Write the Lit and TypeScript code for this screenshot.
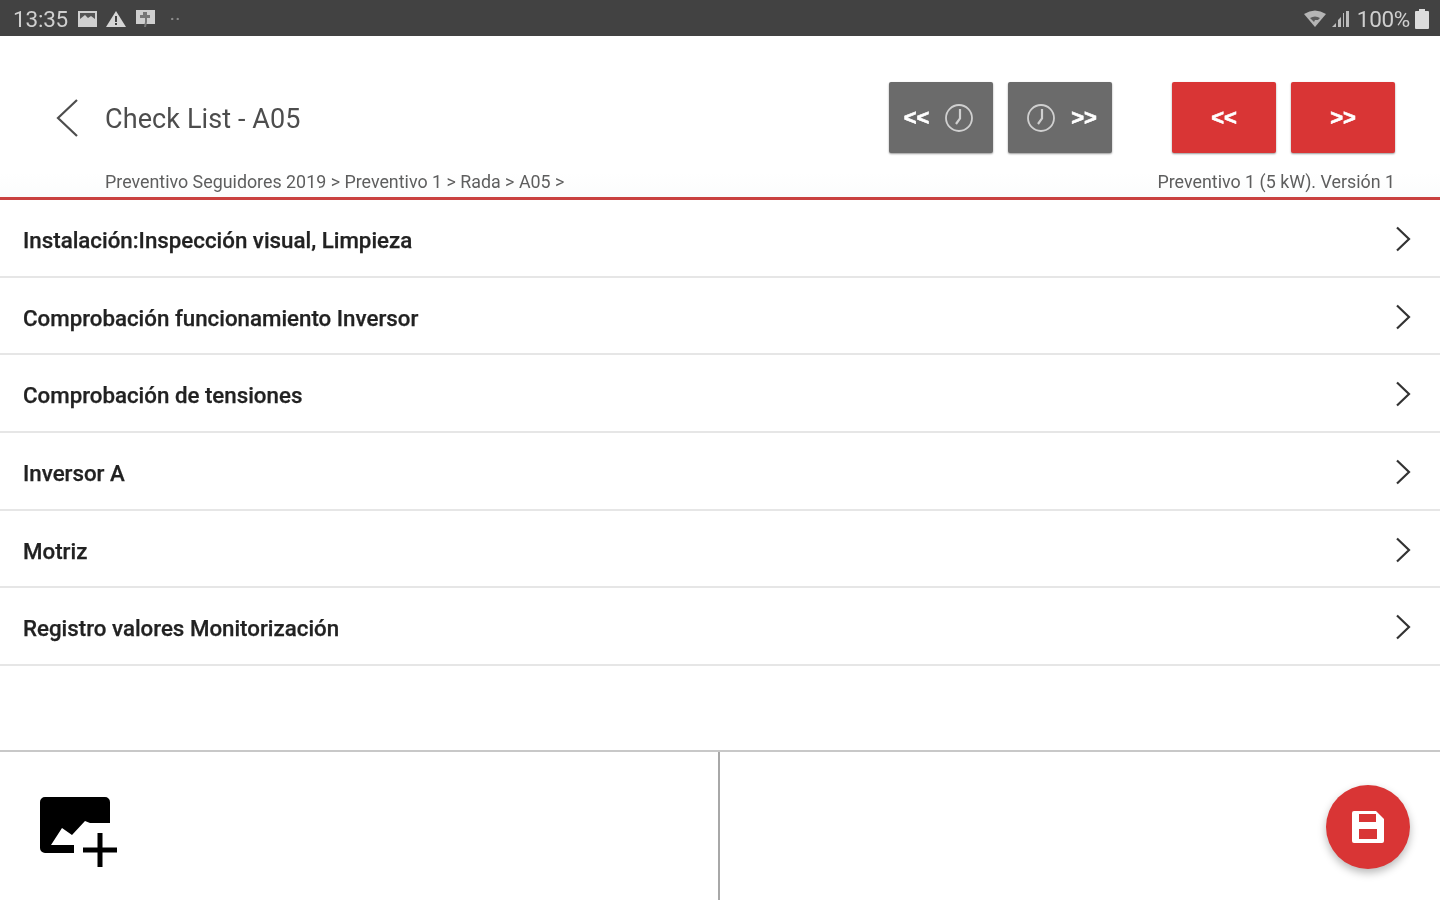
import { LitElement, html, css, svg } from "lit";
import { customElement } from "lit/decorators.js";

const rows = [
  "Instalación:Inspección visual, Limpieza",
  "Comprobación funcionamiento Inversor",
  "Comprobación de tensiones",
  "Inversor A",
  "Motriz",
  "Registro valores Monitorización",
];

const clock = svg`<svg class="clock" viewBox="0 0 30 30" width="30" height="30" fill="none" stroke="#d0d0d0" stroke-width="1.800"><circle cx="15" cy="15" r="13"/><path d="M16 6v9.500l-4 5.500" stroke-width="2.200"/></svg>`;

@customElement("app-root")
export class AppRoot extends LitElement {
  static styles = css`
    :host { display: block; width: 1440px; height: 900px; overflow: hidden; background: #fff; font-family: Roboto, "Liberation Sans", sans-serif; filter: blur(0.7px); }
    .page { display: flex; flex-direction: column; height: 900px; }
    .status { height: 36px; flex: none; background: #424242; display: flex; align-items: center; justify-content: space-between; padding: 2px 11px 0 13px; box-sizing: border-box; color: #cfcfcf; font-size: 22.500px; box-shadow: 0 1px 1px #bbb; }
    .side { display: flex; align-items: center; }
    .time { width: 56px; margin-right: 9px; letter-spacing: -0.2px; }
    .left-icons { display: flex; align-items: center; gap: 9px; }
    .dots { margin-left: 14px; font-size: 15px; font-weight: 700; color: #8e8e8e; letter-spacing: 1px; }
    .signal { margin-left: 6px; }
    .pct { margin: 0 5px 0 7px; letter-spacing: -0.3px; }
    .header { height: 161px; flex: none; box-sizing: border-box; padding-top: 46px; display: flex; flex-direction: column; background: linear-gradient(#fff 85%, #fbfcfc); }
    .top { display: flex; align-items: center; height: 71px; padding: 0 45px 0 52px; }
    .back { margin-right: 25px; }
    .title { font-size: 27px; color: #4d4d4d; letter-spacing: 0.1px; flex: 1; padding-top: 2px; }
    .btns { display: flex; gap: 15px; }
    .btns + .btns { margin-left: 60px; }
    .btn { width: 104px; height: 71px; border-radius: 2px; display: flex; align-items: center; justify-content: center; gap: 15px; color: #fff; box-shadow: 0 1px 2px rgba(0,0,0,.4); box-sizing: border-box; }
    .gray { background: #6b6b6b; }
    .red { background: #d93535; }
    .prev { padding-right: 4px; }
    .next { padding-left: 3px; }
    .arrows { font-family: "Liberation Sans", sans-serif; font-weight: 700; font-size: 22px; letter-spacing: 0; line-height: 1; -webkit-text-stroke: 0.6px #fff; }
    .crumbs { display: flex; justify-content: space-between; padding: 19px 45px 0 105px; font-size: 17.850px; line-height: 20px; color: #5e5e5e; }
    .rule { height: 3px; flex: none; background: #c9413f; }
    .list { flex: 1; display: flex; flex-direction: column; }
    .row { height: 77.700px; flex: none; box-sizing: border-box; display: flex; align-items: center; justify-content: space-between; padding: 2px 29px 0 23px; border-bottom: 2px solid #e6e6e6; font-size: 22.300px; font-weight: 500; color: #222; -webkit-text-stroke: 0.25px #222; }
    .label { padding-top: 2px; }
    .footer { height: 150px; flex: none; border-top: 2px solid #c8c8c8; display: grid; grid-template-columns: 718px 1fr; box-sizing: border-box; }
    .cell { display: flex; align-items: center; box-sizing: border-box; }
    .cell.a { border-right: 2px solid #a8a8a8; padding: 0 0 0 40px; width: 720px; }
    .cell.b { justify-content: flex-end; padding: 2px 30px 0 0; }
    .fab { width: 84px; height: 84px; border-radius: 50%; background: #d93535; display: flex; align-items: center; justify-content: center; box-shadow: 0 4px 8px rgba(0,0,0,.28); }
    .media { margin-top: 14px; }
  `;

  render() {
    return html`<div class="page">
      <div class="status">
        <div class="side">
          <span class="time">13:35</span>
          <div class="left-icons">
            <svg width="19" height="18" viewBox="0 0 19 18"><path fill="#d0d0d0" d="M0 1h19v16H0z"/><path fill="#555" d="M2 9l5-4 3 3 3-2 4 3V3H2z"/></svg>
            <svg width="20" height="18" viewBox="0 0 20 18"><path fill="#d6d6d6" d="M10 1l10 16H0z"/><path fill="#424242" d="M9 6h2v6H9zM9 13h2v2H9z"/></svg>
            <svg width="21" height="20" viewBox="0 0 21 20"><path fill="#cfcfcf" d="M1 1h19v14H1z"/><path fill="#777" d="M8 3h4v3h3v3h-3v4l-1 5h-2l1-5V9H5V6h3z"/></svg>
          </div>
          <span class="dots">··</span>
        </div>
        <div class="side">
          <svg width="22" height="18" viewBox="0 0 22 18"><path fill="#b5b5b5" d="M0 4q11-7 22 0l-11 13z"/><path fill="#5a5a5a" d="M6 8q5-3 10 0l-2 2h-3l-1 2z"/></svg>
          <svg class="signal" width="18" height="18" viewBox="0 0 18 18"><path fill="#bdbdbd" d="M0 17l4-4v4zM6 17V10l3-3v10zM11 17V3h1v14zM14 17V1h3v16z"/></svg>
          <span class="pct">100%</span>
          <svg width="14" height="20" viewBox="0 0 14 20"><path fill="#dcdcdc" d="M4 0h6v2h3a1 1 0 0 1 1 1v16a1 1 0 0 1-1 1H1a1 1 0 0 1-1-1V3a1 1 0 0 1 1-1h3z"/></svg>
        </div>
      </div>
      <div class="header">
        <div class="top">
          <svg class="back" width="28" height="40" viewBox="0 0 28 40" fill="none" stroke="#4d4d4d" stroke-width="2.200"><path d="M25 2L6 20l19 18"/></svg>
          <span class="title">Check List - A05</span>
          <div class="btns">
            <div class="btn gray prev"><span class="arrows">&lt;&lt;</span>${clock}</div>
            <div class="btn gray next">${clock}<span class="arrows">&gt;&gt;</span></div>
          </div>
          <div class="btns">
            <div class="btn red"><span class="arrows">&lt;&lt;</span></div>
            <div class="btn red"><span class="arrows">&gt;&gt;</span></div>
          </div>
        </div>
        <div class="crumbs">
          <span>Preventivo Seguidores 2019 &gt; Preventivo 1 &gt; Rada &gt; A05 &gt;</span>
          <span>Preventivo 1 (5 kW). Versión 1</span>
        </div>
      </div>
      <div class="rule"></div>
      <div class="list">
        ${rows.map((r) => html`<div class="row"><span class="label">${r}</span>
          <svg width="16" height="26" viewBox="0 0 16 26" fill="none" stroke="#333" stroke-width="2.200"><path d="M2 1.500l12 11.500-12 11.500"/></svg></div>`)}
      </div>
      <div class="footer">
        <div class="cell a">
          <svg class="media" width="80" height="72" viewBox="0 0 80 72">
            <path fill="#000" d="M5 0H65a5 5 0 0 1 5 5V26H50L45 24L32 38L22 31L11 48H34V56H5a5 5 0 0 1-5-5V5a5 5 0 0 1 5-5z"/>
            <path fill="none" stroke="#000" stroke-width="5" d="M60 36v34M43 53h34"/>
          </svg>
        </div>
        <div class="cell b">
          <div class="fab">
            <svg width="34" height="34" viewBox="0 0 34 34"><path fill="#fff" d="M3 1h22l8 8v22a2 2 0 0 1-2 2H3a2 2 0 0 1-2-2V3a2 2 0 0 1 2-2z"/><path fill="#d93535" d="M8 4h17v8H8zM8 19h18v10H8z"/></svg>
          </div>
        </div>
      </div>
    </div>`;
  }
}
